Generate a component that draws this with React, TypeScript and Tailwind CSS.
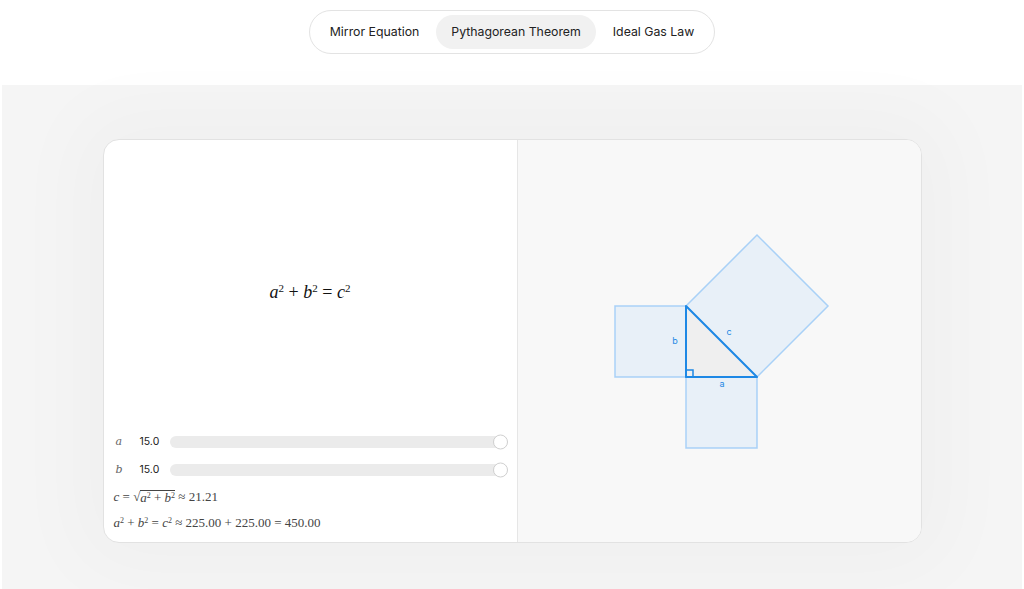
import { useState } from 'react'

const tabs = ['Mirror Equation', 'Pythagorean Theorem', 'Ideal Gas Law']

function Slider({ label, value }: { label: string; value: number }) {
  return (
    <div className="flex items-center h-[28px]">
      <span className="w-[26px] pl-[2px] text-[11px] italic text-[#666]" style={{ fontFamily: '"DejaVu Serif", serif' }}>
        {label}
      </span>
      <span className="w-[30px] text-[10.5px] text-[#222] font-['Inter',sans-serif]">{value.toFixed(1)}</span>
      <div className="relative flex-1 h-[12px] rounded-full bg-[#ebebeb]">
        <div className="absolute right-[-1px] top-1/2 -translate-y-1/2 w-[15px] h-[15px] rounded-full bg-white border border-[#cfcfcf]" />
      </div>
    </div>
  )
}

const serif = { fontFamily: '"Liberation Serif", "DejaVu Serif", serif' }

export default function App() {
  const [active, setActive] = useState(1)
  const a = 15
  const b = 15
  const c = Math.sqrt(a * a + b * b)

  return (
    <div className="w-[1024px] h-[589px] bg-white flex flex-col items-center font-['Inter',sans-serif]">
      {/* tabs */}
      <div className="mt-[10px] h-[44px] flex items-center gap-[2px] px-[5px] rounded-full border border-[#e3e3e3] bg-white">
        {tabs.map((t, i) => (
          <button
            key={t}
            onClick={() => setActive(i)}
            className={`h-[34px] px-[15px] rounded-full text-[12.3px] text-[#222] ${
              active === i ? 'bg-[#f1f1f1]' : ''
            }`}
          >
            {t}
          </button>
        ))}
      </div>

      {/* stage */}
      <div className="mt-[31px] w-[1020px] flex-1 bg-[#f5f5f5] flex justify-center pt-[54px]">
        <div className="w-[819px] h-[404px] rounded-[16px] border border-[#e2e2e2] bg-white shadow-[0_0_80px_30px_rgba(0,0,0,0.025)] flex overflow-hidden">
          {/* left */}
          <div className="w-[414px] flex flex-col px-[10px] pb-[6px] border-r border-[#e6e6e6]">
            <div className="flex-1 flex items-center justify-center pt-[16px]">
              <span className="text-[18px] text-[#111]" style={serif}>
                <i>a</i>
                <sup className="text-[11px]">2</sup> + <i>b</i>
                <sup className="text-[11px]">2</sup> = <i>c</i>
                <sup className="text-[11px]">2</sup>
              </span>
            </div>
            <Slider label="a" value={a} />
            <Slider label="b" value={b} />
            <div className="h-[26px] flex items-center text-[13px] text-[#444]" style={serif}>
              <i>c</i>&nbsp;=&nbsp;
              <span>√</span>
              <span className="border-t border-[#444] leading-[14px]">
                <i>a</i>
                <sup className="text-[8px]">2</sup> + <i>b</i>
                <sup className="text-[8px]">2</sup>
              </span>
              &nbsp;≈ {c.toFixed(2)}
            </div>
            <div className="h-[26px] flex items-center text-[13px] text-[#444]" style={serif}>
              <span>
                <i>a</i>
                <sup className="text-[8px]">2</sup> + <i>b</i>
                <sup className="text-[8px]">2</sup> = <i>c</i>
                <sup className="text-[8px]">2</sup> ≈ {(a * a).toFixed(2)} + {(b * b).toFixed(2)} = {(c * c).toFixed(2)}
              </span>
            </div>
          </div>

          {/* right */}
          <div className="flex-1 bg-[#f8f8f8] flex items-center justify-center">
            <svg width="230" height="230" viewBox="603 226 230 230">
              <g fill="#e8f0f8" stroke="#a9d1f7" strokeWidth="1.5">
                <rect x="685" y="377" width="71" height="71" />
                <rect x="614" y="306" width="71" height="71" />
                <polygon points="685,306 756,377 827,306 756,235" />
              </g>
              <polygon points="685,377 685,306 756,377" fill="#efefef" stroke="#1e88e5" strokeWidth="2" strokeLinejoin="round" />
              <rect x="685" y="370" width="7" height="7" fill="none" stroke="#1e88e5" strokeWidth="1.5" />
              <g fill="#1e88e5" fontSize="9" fontFamily="Inter, sans-serif" textAnchor="middle">
                <text x="674" y="344">b</text>
                <text x="728" y="335">c</text>
                <text x="721" y="387">a</text>
              </g>
            </svg>
          </div>
        </div>
      </div>
    </div>
  )
}
